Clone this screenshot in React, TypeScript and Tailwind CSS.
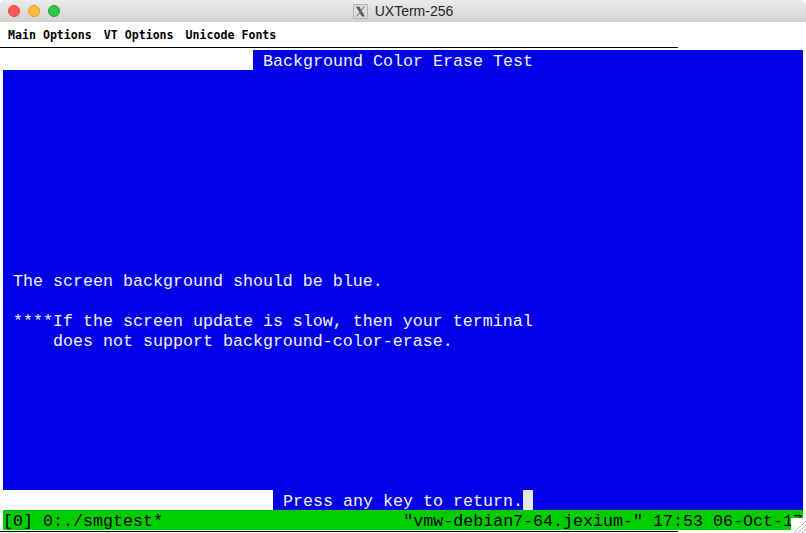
import React from 'react';

const mono = 'font-["Liberation_Mono",monospace] text-[16.67px] leading-[20px] pt-[2px] whitespace-pre';

const Row: React.FC<{ children?: React.ReactNode }> = ({ children }) => (
  <div className={`h-[20px] ${mono}`}>{children}</div>
);

const XIcon = () => (
  <svg width="15" height="15" viewBox="0 0 15 15" className="mr-[7px]">
    <rect x="0.5" y="0.5" width="14" height="14" fill="#dedede" stroke="#b4b4b4" />
    <path d="M3 2.500h3.200l5.800 10H8.800z" fill="#5a5a5a" />
    <path d="M12 2.500h-1.300L3 12.500h1.300z" fill="#777" />
  </svg>
);

export default function App() {
  return (
    <div className="relative w-[806px] h-[533px] overflow-hidden bg-white">
      {/* Title bar */}
      <div className="relative flex h-[22px] items-center justify-center rounded-t-[5px] bg-gradient-to-b from-[#ececec] to-[#d2d2d2]">
        <div className="absolute left-[8px] top-[5px] flex gap-[8px]">
          <span className="h-[12px] w-[12px] rounded-full border border-[#e2463f] bg-[#fc5753]" />
          <span className="h-[12px] w-[12px] rounded-full border border-[#e1a116] bg-[#fdbc40]" />
          <span className="h-[12px] w-[12px] rounded-full border border-[#13a62b] bg-[#33c748]" />
        </div>
        <XIcon />
        <span className='font-["Liberation_Sans",sans-serif] text-[14px] text-[#262626]'>UXTerm-256</span>
      </div>

      {/* Menu bar */}
      <div className='flex h-[25px] items-center gap-[12px] pl-[8px] pt-[3px] font-["DejaVu_Sans_Mono",monospace] text-[11.6px] font-bold text-black'>
        <span>Main Options</span>
        <span>VT Options</span>
        <span>Unicode Fonts</span>
      </div>
      <div className="h-[1px] w-[678px] bg-black" />

      {/* Terminal */}
      <div className="mt-[2px] ml-[3px] w-[800px] text-[#f2f2f2]">
        <div className="bg-[#0000e6]">
          <div className="flex">
            <div className="h-[20px] w-[250px] bg-white" />
            <Row>{' Background Color Erase Test'}</Row>
          </div>
          <div className="h-[200px]" />
          <Row>{' The screen background should be blue.'}</Row>
          <Row />
          <Row>{' ****If the screen update is slow, then your terminal'}</Row>
          <Row>{'     does not support background-color-erase.'}</Row>
          <div className="h-[140px]" />
          <div className="flex">
            <div className="h-[20px] w-[270px] bg-white" />
            <Row>{' Press any key to return.'}</Row>
            <div className="h-[20px] w-[10px] bg-[#e5e5e5]" />
          </div>
        </div>
        <div className={`flex h-[20px] justify-between overflow-hidden bg-[#00cd00] text-black ${mono}`}>
          <span>[0] 0:./smgtest*</span>
          <span>"vmw-debian7-64.jexium-" 17:53 06-Oct-17</span>
        </div>
      </div>

      <div className="mt-[1px] h-[1px] w-[678px] bg-black" />

      {/* Resize grip */}
      <div className="absolute bottom-0 right-0 h-[15px] w-[15px] bg-white">
        <svg width="15" height="15" viewBox="0 0 15 15">
          <path d="M3 15L15 3M7 15L15 7M11 15l4-4" stroke="#bbb" strokeWidth="1" fill="none" />
        </svg>
      </div>
    </div>
  );
}
